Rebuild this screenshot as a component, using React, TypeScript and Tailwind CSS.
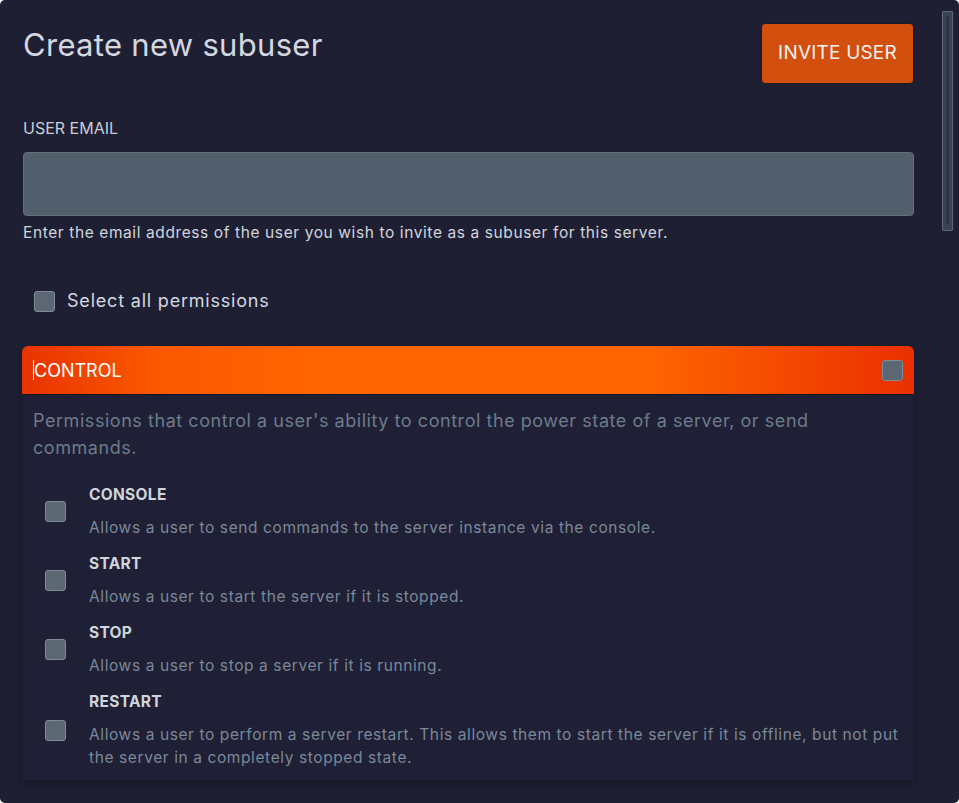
import React from "react";

const items = [
  { t: "CONSOLE", d: "Allows a user to send commands to the server instance via the console." },
  { t: "START", d: "Allows a user to start the server if it is stopped." },
  { t: "STOP", d: "Allows a user to stop a server if it is running." },
  {
    t: "RESTART",
    d: "Allows a user to perform a server restart. This allows them to start the server if it is offline, but not put the server in a completely stopped state.",
  },
];

function Box({ className = "" }: { className?: string }) {
  return (
    <span
      className={
        "block w-[21px] h-[21px] shrink-0 rounded-[3px] bg-[#5c6774] border border-[#7f8b98] " + className
      }
    />
  );
}

export default function App() {
  return (
    <div
      className="relative w-[959px] h-[803px] overflow-hidden rounded-[5px] bg-[#1f1f33] text-[#d5d9e0]"
      style={{ fontFamily: "Inter, 'Noto Sans', sans-serif" }}
    >
      <div className="pl-[23px] pr-[45px] pt-[23px]">
        <div className="flex justify-between items-start">
          <h1 className="text-[31px] leading-[44px] tracking-[0.3px] text-[#d3d8e0]">Create new subuser</h1>
          <button className="w-[153px] h-[61px] rounded-[4px] bg-[#d24f0e] border border-[#1a1a22] text-[19px] text-[#f1f2f4] tracking-[0.2px]">
            INVITE USER
          </button>
        </div>
        <div className="mt-[34px] text-[16px] leading-[20px] text-[#c8ced6]">USER EMAIL</div>
        <div className="mt-[14px] h-[64px] rounded-[4px] bg-[#525f6c] border border-[#63707c]" />
        <p className="mt-[6px] text-[15.5px] leading-[22px] tracking-[0.6px] text-[#d0d5dc]">
          Enter the email address of the user you wish to invite as a subuser for this server.
        </p>
        <label className="mt-[45px] ml-[11px] flex items-center gap-[12px]">
          <Box />
          <span className="text-[18px] leading-[24px] tracking-[0.8px] text-[#d3d8e0]">Select all permissions</span>
        </label>
        <div className="mt-[33px] -ml-px rounded-t-[6px] bg-[#1f2035] shadow-[0_4px_8px_rgba(0,0,0,0.25)]">
          <div className="h-[49px] flex items-center justify-between pl-[11px] pr-[11px] rounded-t-[6px] border-b border-[#15151f] bg-[linear-gradient(to_right,#e93300_0%,#fb5800_15%,#ff6600_35%,#ff6500_70%,#f54a00_85%,#e93000_100%)]">
            <span className="flex items-center text-[18px] text-white">
              <span className="block w-px h-[20px] bg-white" />
              CONTROL
            </span>
            <Box />
          </div>
          <div className="pl-[11px] pr-[10px] pt-[12px] pb-[4px]">
            <p className="text-[18px] leading-[27px] tracking-[0.55px] text-[#6d7b8b] pr-[60px]">
              Permissions that control a user's ability to control the power state of a server, or send commands.
            </p>
            <div className="mt-[16px] flex flex-col">
              {items.map((it) => (
                <div key={it.t} className="flex items-center pt-[7px] pb-[7px]">
                  <div className="w-[56px] flex pl-[12px]">
                    <Box />
                  </div>
                  <div className="flex-1">
                    <div className="text-[15.5px] leading-[22px] tracking-[0.3px] font-bold text-[#d0d5dc]">{it.t}</div>
                    <div className="mt-[10px] text-[15.5px] leading-[23px] tracking-[0.6px] text-[#7b8898]">{it.d}</div>
                  </div>
                </div>
              ))}
            </div>
          </div>
        </div>
      </div>
      <div className="absolute left-[942px] top-[11px] w-[11px] h-[220px] rounded-[1px] bg-[#3a4354] border border-[#5d6979] flex justify-center">
        <span className="mt-[4px] w-[3px] h-[208px] bg-[#2c3443]" />
      </div>
    </div>
  );
}
